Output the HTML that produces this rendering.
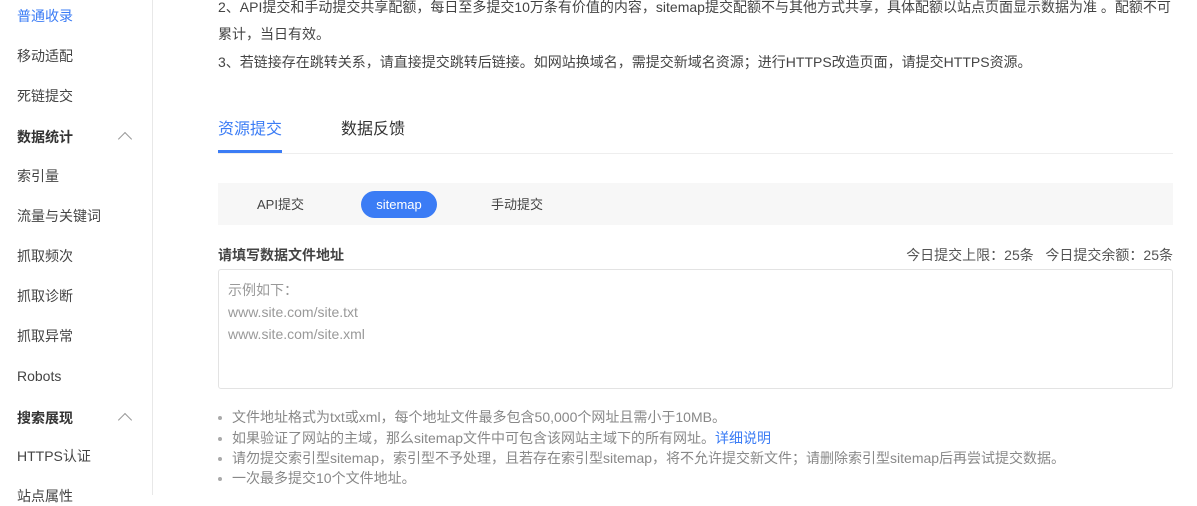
<!DOCTYPE html>
<html><head><meta charset="utf-8"><style>
*{margin:0;padding:0;box-sizing:border-box}
body{width:1197px;height:495px;overflow:hidden;background:#fff;font-family:"Liberation Sans","Noto Sans CJK SC",sans-serif;color:#333;position:relative}
.side{position:absolute;left:0;top:0;width:153px;height:495px;border-right:1px solid #e8e8e8}
.si{position:absolute;left:17px;font-size:14px;color:#444;line-height:20px}
.si.b{font-weight:bold;color:#333}
.chev{position:absolute;left:120px;width:10px;height:10px;border-left:1.5px solid #999;border-top:1.5px solid #999;transform:rotate(45deg)}
.a{position:absolute;font-size:14px;line-height:20px;color:#444;white-space:nowrap}
.bul{position:absolute;left:218px;font-size:14px;color:#888;line-height:18px;white-space:nowrap}
.bul:before{content:"";position:absolute;left:0;top:8px;width:4px;height:4px;border-radius:2px;background:#aaa}
.bul span.t{margin-left:14px}
</style></head><body>
<div class="side">
<div class="si" style="top:6px;color:#3b7cf5">普通收录</div>
<div class="si" style="top:46px">移动适配</div>
<div class="si" style="top:86px">死链提交</div>
<div class="si b" style="top:127px">数据统计</div><div class="chev" style="top:134px"></div>
<div class="si" style="top:166px">索引量</div>
<div class="si" style="top:206px">流量与关键词</div>
<div class="si" style="top:246px">抓取频次</div>
<div class="si" style="top:286px">抓取诊断</div>
<div class="si" style="top:326px">抓取异常</div>
<div class="si" style="top:366px">Robots</div>
<div class="si b" style="top:408px">搜索展现</div><div class="chev" style="top:415px"></div>
<div class="si" style="top:446px">HTTPS认证</div>
<div class="si" style="top:486px">站点属性</div>
</div>
<div class="a" style="left:218px;top:-3px">2、API提交和手动提交共享配额，每日至多提交10万条有价值的内容，sitemap提交配额不与其他方式共享，具体配额以站点页面显示数据为准 。配额不可</div>
<div class="a" style="left:218px;top:24px">累计，当日有效。</div>
<div class="a" style="left:218px;top:52px">3、若链接存在跳转关系，请直接提交跳转后链接。如网站换域名，需提交新域名资源；进行HTTPS改造页面，请提交HTTPS资源。</div>
<div class="a" style="left:218px;top:119px;font-size:16px;line-height:22px;color:#3b7cf5">资源提交</div>
<div class="a" style="left:341px;top:119px;font-size:16px;line-height:22px;color:#333">数据反馈</div>
<div style="position:absolute;left:218px;top:153px;width:955px;height:1px;background:#eee"></div>
<div style="position:absolute;left:218px;top:150px;width:64px;height:3px;background:#3b7cf5"></div>
<div style="position:absolute;left:218px;top:183px;width:955px;height:42px;background:#f7f7f7"></div>
<div class="a" style="left:257px;top:195px;font-size:13px">API提交</div>
<div style="position:absolute;left:361px;top:191px;width:76px;height:27px;border-radius:14px;background:#3b7cf5;color:#fff;font-size:13px;line-height:27px;text-align:center">sitemap</div>
<div class="a" style="left:491px;top:195px;font-size:13px">手动提交</div>
<div class="a" style="left:218px;top:245px;font-weight:bold;font-size:14px">请填写数据文件地址</div>
<div class="a" style="right:24px;top:245px;font-size:14px;color:#555">今日提交上限：25条&nbsp;&nbsp;&nbsp;今日提交余额：25条</div>
<div style="position:absolute;left:218px;top:269px;width:955px;height:120px;border:1px solid #e3e3e3;border-radius:3px"></div>
<div class="a" style="left:228px;top:280px;color:#999">示例如下：</div>
<div class="a" style="left:228px;top:302px;color:#999">www.site.com/site.txt</div>
<div class="a" style="left:228px;top:324px;color:#999">www.site.com/site.xml</div>
<div class="bul" style="top:408px"><span class="t">文件地址格式为txt或xml，每个地址文件最多包含50,000个网址且需小于10MB。</span></div>
<div class="bul" style="top:429px"><span class="t">如果验证了网站的主域，那么sitemap文件中可包含该网站主域下的所有网址。<span style="color:#3b7cf5">详细说明</span></span></div>
<div class="bul" style="top:449px"><span class="t">请勿提交索引型sitemap，索引型不予处理，且若存在索引型sitemap，将不允许提交新文件；请删除索引型sitemap后再尝试提交数据。</span></div>
<div class="bul" style="top:469px"><span class="t">一次最多提交10个文件地址。</span></div>
</body></html>
